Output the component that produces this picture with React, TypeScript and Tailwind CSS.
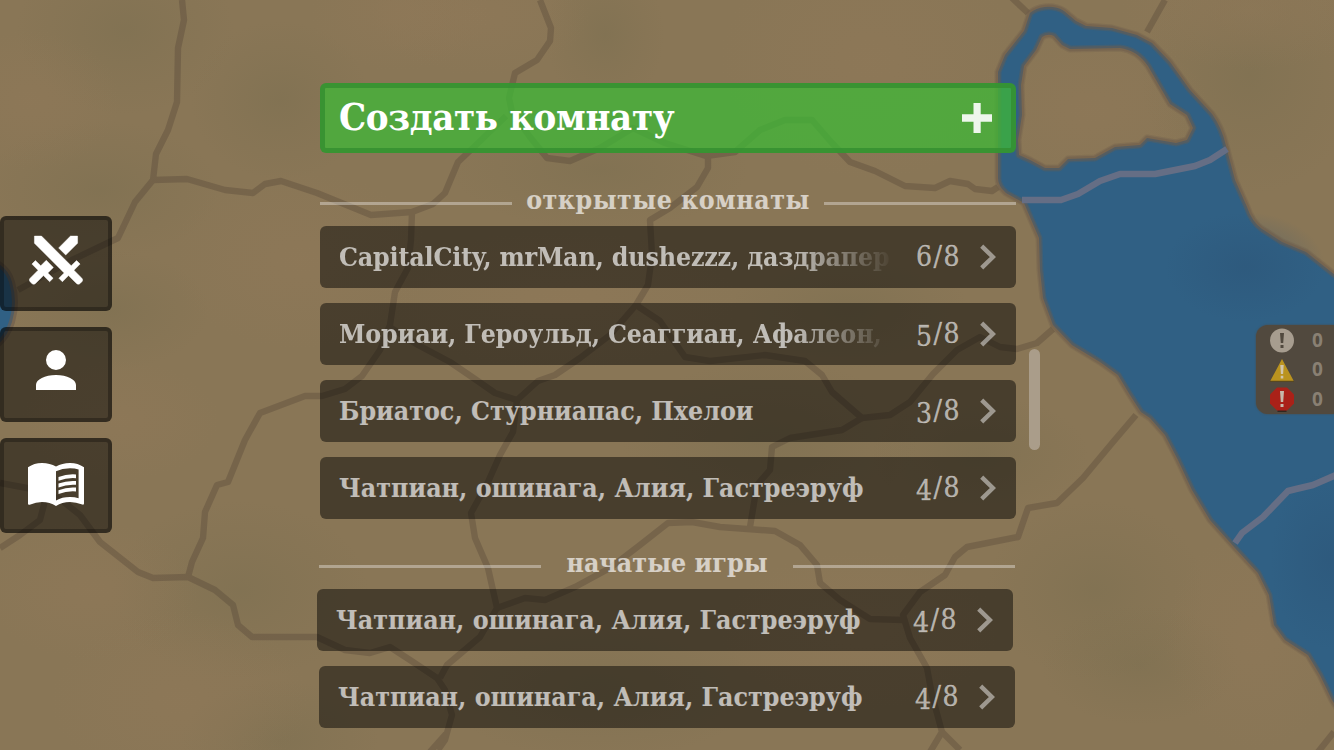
import type { ReactNode } from "react";

const serif = "font-['DejaVu_Serif_Condensed','DejaVu_Serif',serif] [font-stretch:condensed]";

const shades: [number, number, number, number][] = [
  [125, 30, 110, 85],
  [280, 100, 90, 80],
  [605, 35, 60, 75],
  [100, 190, 120, 70],
  [600, 170, 150, 60],
  [850, 310, 120, 60],
  [980, 455, 110, 60],
  [1095, 590, 110, 90],
  [1140, 665, 100, 60],
  [280, 740, 100, 60],
  [110, 310, 100, 60],
  [1250, 75, 110, 120],
  [770, 440, 150, 80],
  [240, 590, 130, 90],
  [600, 690, 160, 70],
];

const lights: [number, number, number, number][] = [
  [480, 15, 110, 60],
  [400, 12, 90, 60],
  [300, 260, 130, 90],
  [90, 590, 110, 70],
  [870, 60, 150, 120],
  [1255, 640, 90, 110],
  [180, 700, 130, 90],
  [560, 300, 180, 70],
  [30, 100, 90, 70],
  [1090, 110, 120, 80],
  [1250, 10, 130, 60],
  [860, 630, 140, 80],
  [120, 420, 100, 60],
];

const roads = [
  "182,0 184,20 178,48 177,102 168,130 156,154 153,180 187,179 225,190 253,193 265,184 281,181 317,193 371,215 412,212 433,204 445,193 458,162 475,146 506,116",
  "153,180 135,202 118,238 72,260 18,290",
  "540,0 551,28 550,41 537,60 515,73 509,98 512,112 530,137 547,158 570,161 600,148 633,128 665,143 706,156 735,152 760,130 785,120 812,120 832,143 850,162 875,171 905,186 935,188 950,181 968,184 975,189 992,191 998,187",
  "708,156 708,168 697,187 670,208 650,220 652,255 648,285 636,305 610,335 580,358 555,375 538,381 517,400 513,432 500,455 488,482 471,513 475,538 488,568 497,608 480,637 447,665 440,678",
  "636,305 660,321 685,357 710,361 765,355 805,361 822,375 832,392 862,418 890,415 910,402 933,374 957,350 980,337 1000,347 1017,349 1037,343 1053,329",
  "862,418 842,430 790,438 772,447 770,470 757,485 750,527",
  "412,212 411,240 408,268 395,292 390,325 380,350 362,376 345,389 322,396 305,396 260,413 245,440 228,482 217,485 205,512 203,538 192,562 188,577",
  "391,328 418,345 450,362 472,377 495,393 517,400",
  "0,483 27,488 60,499 80,515 100,542 138,572 153,578 188,577 215,590 233,605 238,625 252,637 317,637 345,650 370,653 390,647 410,660 437,678 445,690 452,715 445,740 438,750",
  "0,548 20,535 40,520 46,497",
  "497,608 525,598 545,600 575,587 610,568 640,545 668,523 692,522 720,527 775,531 800,545 817,565 820,583 840,600 870,619 903,620",
  "1136,415 1113,442 1083,478 1057,503 1028,508 1018,537 967,547 955,557 945,575 920,592 903,615 910,638 927,668 932,695 942,732 930,752",
  "942,732 960,750",
  "1334,732 1318,752",
  "1165,0 1147,32",
  "1012,-2 1028,13",
  "430,752 446,734",
];

const sea =
  "M1030 13Q1036 8 1045 7Q1056 6 1064 11L1076 21L1086 26L1112 28L1137 35L1152 43L1170 62L1190 90L1212 114Q1222 128 1226 146L1235 180L1247 207Q1252 222 1262 229L1282 242L1306 252L1345 283V720L1332 700L1320 675L1308 655L1285 640L1274 625L1269 595L1258 573L1235 548L1210 520L1192 490L1178 460L1165 435L1150 418L1141 412L1130 395L1118 375L1100 362L1072 345L1053 325L1043 298L1040 270L1039 238L1024 203L1006 193Q998 186 998 178V72L1005 55L1024 31Z" +
  "M1042 37Q1048 33 1054 36L1062 45L1070 49L1120 48Q1137 50 1148 66L1170 104L1187 115L1193 128L1187 140L1176 143L1147 138L1140 145L1115 147L1095 158L1068 159L1059 168L1045 168L1030 160L1019 155L1018 140L1022 115L1021 85L1024 66L1036 50Z";

function MapBackground() {
  return (
    <svg className="absolute inset-0 h-[750px] w-[1334px]" viewBox="0 0 1334 750" aria-hidden="true">
      <defs>
        <radialGradient id="shade">
          <stop offset="0" stopColor="#6e684a" stopOpacity="0.26" />
          <stop offset="0.5" stopColor="#6e684a" stopOpacity="0.12" />
          <stop offset="1" stopColor="#6e684a" stopOpacity="0" />
        </radialGradient>
        <radialGradient id="light">
          <stop offset="0" stopColor="#927959" stopOpacity="0.4" />
          <stop offset="0.5" stopColor="#927959" stopOpacity="0.22" />
          <stop offset="1" stopColor="#927959" stopOpacity="0" />
        </radialGradient>
        <radialGradient id="deep">
          <stop offset="0" stopColor="#2c5477" stopOpacity="0.5" />
          <stop offset="1" stopColor="#2c5477" stopOpacity="0" />
        </radialGradient>
      </defs>
      <rect width="1334" height="750" fill="#897656" />
      {shades.map(([x, y, rx, ry]) => (
        <ellipse key={`s${x}-${y}`} cx={x} cy={y} rx={rx} ry={ry} fill="url(#shade)" />
      ))}
      {lights.map(([x, y, rx, ry]) => (
        <ellipse key={`l${x}-${y}`} cx={x} cy={y} rx={rx} ry={ry} fill="url(#light)" />
      ))}
      <g fill="none" stroke="#4b3c31" strokeWidth="6.4" strokeLinejoin="round" opacity="0.3">
        {roads.map((points) => (
          <polyline key={points} points={points} />
        ))}
      </g>
      <path d={sea} fillRule="evenodd" fill="#306084" />
      <path d="M-5 262Q8 268 12 282Q18 302 12 322Q6 340 -5 346Z" fill="#306084" />
      <ellipse cx="1245" cy="267" rx="80" ry="55" fill="url(#deep)" />
      <ellipse cx="1330" cy="560" rx="60" ry="90" fill="url(#deep)" />
      <g fill="none" stroke="#6c5c4c" strokeLinejoin="round">
        <path d={sea} strokeWidth="7" strokeOpacity="0.3" />
        <path d={sea} strokeWidth="4.5" strokeOpacity="0.45" />
        <path d="M-5 262Q8 268 12 282Q18 302 12 322Q6 340 -5 346" strokeWidth="6" strokeOpacity="0.6" />
      </g>
      <g fill="none" stroke="#656e85" strokeWidth="6.5" strokeLinejoin="round">
        <polyline points="1022,200 1061,200 1078,194 1100,181 1120,174 1155,174 1195,166 1210,160 1227,149" />
        <polyline points="1235,543 1242,533 1263,517 1288,491 1296,489 1313,485 1336,475" />
      </g>
    </svg>
  );
}

function NavButton({ children, label }: { children: ReactNode; label: string }) {
  return (
    <button
      aria-label={label}
      className="flex h-[95px] w-28 justify-center rounded-md border-4 border-black/30 bg-black/[0.47] text-white"
    >
      {children}
    </button>
  );
}

function SwordsIcon() {
  return (
    <svg className="mt-[10px] size-[60px]" viewBox="0 0 24 24" fill="currentColor">
      <path d="M6.2 2.44 18.1 14.34l2.12-2.12 1.41 1.41-2.47 2.47 3.18 3.18c.39.39.39 1.02 0 1.41l-.71.71c-.39.39-1.02.39-1.41 0L17 18.23l-2.44 2.47-1.41-1.41 2.12-2.12L3.37 5.27V2.44H6.2M15.89 10l4.74-4.74V2.44H17.8l-4.74 4.74L15.89 10m-4.95 5-2.83-2.87-2.21 2.21-2.12-2.12-1.41 1.41 2.47 2.47-3.18 3.19c-.39.39-.39 1.02 0 1.41l.71.71c.39.39 1.02.39 1.41 0L7 18.23l2.44 2.47 1.41-1.41-2.12-2.12L10.94 15z" stroke="currentColor" strokeWidth="0.2" />
    </svg>
  );
}

function PersonIcon() {
  return (
    <svg className="mt-[9px] size-[60px]" viewBox="0 0 24 24" fill="currentColor">
      <path d="M12 4a4 4 0 1 1 0 8 4 4 0 0 1 0-8m0 10c4.42 0 8 1.79 8 4v2H4v-2c0-2.21 3.58-4 8-4z" />
    </svg>
  );
}

function BookIcon() {
  return (
    <svg className="mt-5 h-[45px] w-[58px]" viewBox="27 462 58 45" fill="currentColor">
      <path
        fillRule="evenodd"
        d="M28 467.3Q34 463 42 463Q50 463 56 466.6Q62 463 70 463Q78 463 84 467.3V503.6Q84 505.2 82.3 504.6Q76 502 70 502Q62 502.2 56 506Q50 502.2 42 502Q36 502 29.7 504.7Q28 505.3 28 503.6ZM56 471.3V500.4Q62 497 70 497Q75 497 78.6 498.2V469.6Q75 468.2 70 468.2Q62 468.4 56 471.3Z"
      />
      <path d="M58.5 477Q67 473.7 76 474.4V478.2Q67 477.5 58.5 480.8ZM58.5 483.6Q67 480.3 76 481V484.8Q67 484.1 58.5 487.4ZM58.5 490.2Q67 486.9 76 487.6V491.4Q67 490.7 58.5 494Z" />
    </svg>
  );
}

function Count({ value }: { value: number }) {
  const descends = value >= 3 && value <= 5;
  return (
    <span className="flex w-[46px] text-[28px] leading-none tracking-[1.5px] text-white/60 [-webkit-text-stroke:0.4px_rgba(255,255,255,0.4)]">
      <span className={descends ? "translate-y-[3px]" : ""}>{value}</span>
      <span>/8</span>
    </span>
  );
}

interface RoomProps {
  players: string;
  count: number;
  tracking: string;
  fade?: boolean;
  shift?: string;
}

function Room({ players, count, tracking, fade = false, shift = "" }: RoomProps) {
  return (
    <div className={`flex h-[62px] w-[696px] items-center rounded-md bg-black/[0.47] pl-[19px] ${shift}`}>
      <span
        className={`w-[556px] text-[26.5px] leading-[40px] font-bold whitespace-nowrap text-white/[0.66] ${tracking} ${
          fade ? "[mask-image:linear-gradient(to_right,#000_455px,transparent_556px)]" : ""
        }`}
      >
        {players}
      </span>
      <span className="ml-[21px]">
        <Count value={count} />
      </span>
      <svg className="ml-[18px] h-[26px] w-4" viewBox="0 0 16 26" fill="none" stroke="#ffffff" strokeOpacity="0.47" strokeWidth="4.4">
        <path d="M1.7 2.2 12.9 13 1.7 23.8" />
      </svg>
    </div>
  );
}

function Heading({ children, gap, shift = "" }: { children: string; gap: string; shift?: string }) {
  return (
    <div className={`flex h-[40px] w-[696px] items-center ${shift}`}>
      <span className="mt-[3px] h-[3px] flex-1 bg-white/[0.35]" />
      <h2 className={`mb-[3px] text-center text-[26.5px] leading-none font-bold whitespace-nowrap text-white/[0.66] ${gap}`}>{children}</h2>
      <span className="mt-[3px] h-[3px] flex-1 bg-white/[0.35]" />
    </div>
  );
}

function StatusPanel() {
  return (
    <aside className="mt-[325px] ml-auto flex h-[89px] w-[78px] flex-col rounded-l-xl bg-[#51493e] pt-[1px] font-['Noto_Sans',sans-serif] text-[19px] leading-none font-bold text-[#898073] shadow-[0_0_2px_#51493e]">
      <div className="flex h-[30px] items-center pl-[13px]">
        <svg className="size-[26px]" viewBox="0 0 26 26">
          <circle cx="13" cy="12.5" r="12" fill="#a79d8f" />
          <path d="M11 5h4l-.8 10h-2.4zM11.5 17h3v3h-3z" fill="#51493e" />
        </svg>
        <span className="ml-[17px]">0</span>
      </div>
      <div className="flex h-[30px] items-center pl-[13px]">
        <svg className="size-[26px]" viewBox="0 0 26 26">
          <path d="M13 2 25 24.5H1z" fill="#ba931f" />
          <path d="M1 24.3h24" stroke="#4b3f20" strokeWidth="1" />
          <path d="M11.3 8h3.4l-.6 9h-2.2zM11.7 18.7h2.6v2.8h-2.6z" fill="#d1c5ad" />
        </svg>
        <span className="ml-[17px]">0</span>
      </div>
      <div className="flex h-[30px] items-center pl-[13px]">
        <svg className="size-[26px]" viewBox="0 0 26 26">
          <path d="M8.5 24h9v2h-9z" fill="#302720" />
          <path d="M8 1.5h10l7 7v9l-7 7H8l-7-7v-9z" fill="#aa2118" />
          <path d="M11 5h4l-.8 11h-2.4zM11.5 18h3v3h-3z" fill="#c6b9aa" />
        </svg>
        <span className="ml-[17px]">0</span>
      </div>
    </aside>
  );
}

export default function App() {
  return (
    <div className={`relative h-[750px] w-[1334px] overflow-hidden bg-[#897656] ${serif}`}>
      <MapBackground />
      <div className="relative flex h-full items-start">
        <nav className="mt-[216px] flex flex-col gap-4">
          <NavButton label="Игра">
            <SwordsIcon />
          </NavButton>
          <NavButton label="Профиль">
            <PersonIcon />
          </NavButton>
          <NavButton label="Правила">
            <BookIcon />
          </NavButton>
        </nav>

        <main className="mt-[83px] ml-[208px] w-[696px]">
          <button className="flex h-[70px] w-full items-center rounded-md border-[5px] border-[#338f2f]/80 bg-[#3eb936]/[0.74] pr-[18px] pl-[14px] text-[38px] leading-none font-bold text-white">
            <span className="mb-[2px] whitespace-nowrap tracking-[-0.35px]">Создать комнату</span>
            <svg className="ml-auto size-[32px]" viewBox="0 0 32 32" fill="#ffffff" fillOpacity="0.9">
              <path d="M12.5 1h7.2v11.200H31v7.500H19.700v11.300h-7.200V19.700H1v-7.500h11.500z" />
            </svg>
          </button>

          <Heading gap="w-[312px] tracking-[0.47px]" shift="mt-[29px]">
            открытые комнаты
          </Heading>
          <section className="mt-1 flex flex-col gap-[15px]">
            <Room players="CapitalCity, mrMan, dushezzz, даздрапер" count={6} tracking="tracking-[-0.17px]" fade />
            <Room players="Мориаи, Героульд, Сеаггиан, Афалеон," count={5} tracking="tracking-[-0.13px]" fade />
            <Room players="Бриатос, Стурниапас, Пхелои" count={3} tracking="tracking-[0px]" />
            <Room players="Чатпиан, ошинага, Алия, Гастреэруф" count={4} tracking="tracking-[0px]" />
          </section>

          <Heading gap="w-[252px] tracking-[0.03px]" shift="mt-[26px] -ml-px">
            начатые игры
          </Heading>
          <section className="mt-1 flex flex-col gap-[15px]">
            <Room players="Чатпиан, ошинага, Алия, Гастреэруф" count={4} tracking="tracking-[0px]" shift="-ml-[3px]" />
            <Room players="Чатпиан, ошинага, Алия, Гастреэруф" count={4} tracking="tracking-[0px]" shift="-ml-px" />
          </section>
        </main>

        <div className="mt-[349px] ml-[13px] h-[101px] w-[11px] rounded-full bg-[#aa9d8a]" />
        <StatusPanel />
      </div>
    </div>
  );
}
